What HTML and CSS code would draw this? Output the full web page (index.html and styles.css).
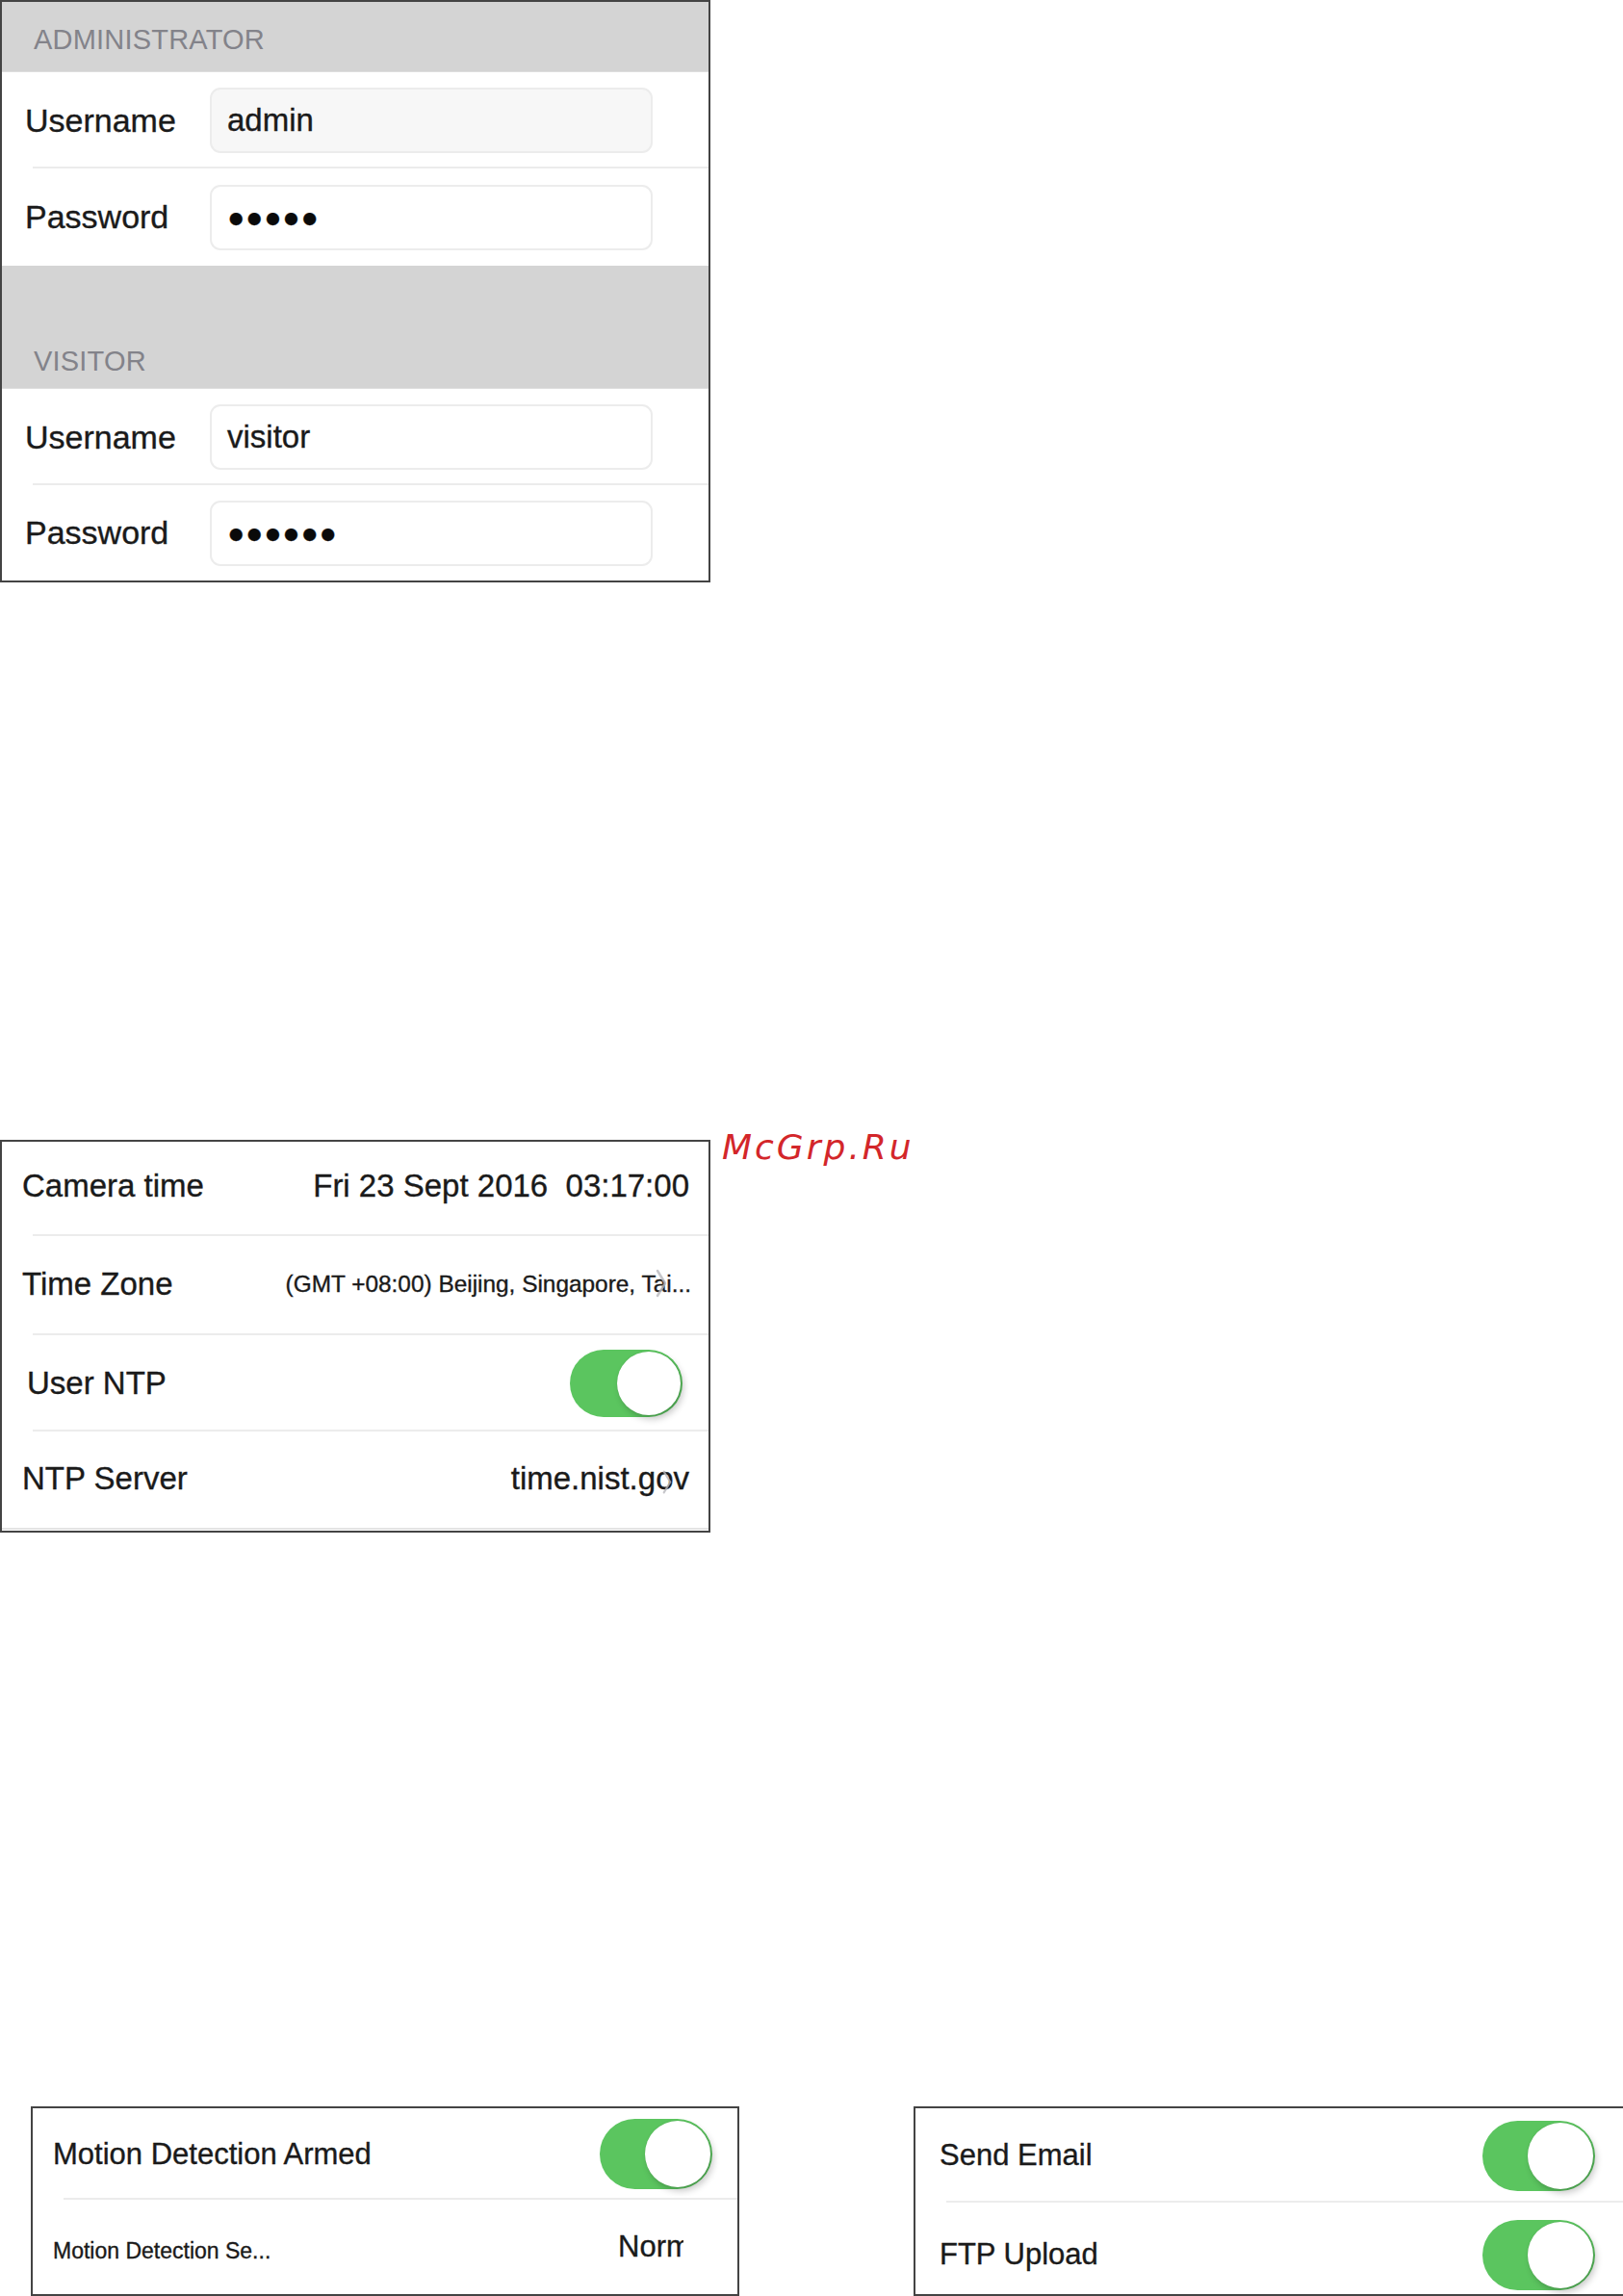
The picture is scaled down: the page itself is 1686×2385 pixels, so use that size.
FILE: index.html
```html
<!DOCTYPE html>
<html lang="en">
<head>
<meta charset="utf-8">
<title>Camera settings</title>
<link rel="stylesheet" href="styles.css">
</head>
<body>
<div class="page">

  <section class="panel accounts">
    <div class="group-head admin-head">ADMINISTRATOR</div>
    <div class="row field-row sep r1">
      <span class="label">Username</span>
      <div class="input filled">admin</div>
    </div>
    <div class="row field-row r2">
      <span class="label">Password</span>
      <div class="input dots">●●●●●</div>
    </div>
    <div class="group-head visitor-head">VISITOR</div>
    <div class="row field-row sep r3">
      <span class="label">Username</span>
      <div class="input">visitor</div>
    </div>
    <div class="row field-row r4">
      <span class="label">Password</span>
      <div class="input dots">●●●●●●</div>
    </div>
  </section>

  <div class="time-line">
    <section class="panel timepanel">
      <div class="row trow sep t1">
        <span class="label">Camera time</span>
        <span class="value">Fri 23 Sept 2016  03:17:00</span>
      </div>
      <div class="row trow sep t2">
        <span class="label">Time Zone</span>
        <span class="value small">(GMT +08:00) Beijing, Singapore, Tai...</span>
        <svg class="chev chev-tz" viewBox="0 0 12 30" width="12" height="30"><path d="M2 2 L10 15 L2 28" fill="none" stroke="#b8b8bd" stroke-width="2.5" stroke-linecap="round" stroke-linejoin="round"/></svg>
      </div>
      <div class="row trow sep t3">
        <span class="label ntp">User NTP</span>
        <span class="toggle"></span>
      </div>
      <div class="row trow t4">
        <span class="label">NTP Server</span>
        <span class="value">time.nist.gov</span>
        <svg class="chev chev-ntp" viewBox="0 0 12 30" width="10" height="27"><path d="M2 2 L10 15 L2 28" fill="none" stroke="#b8b8bd" stroke-width="2.5" stroke-linecap="round" stroke-linejoin="round"/></svg>
      </div>
    </section>
    <div class="brand">McGrp.Ru</div>
  </div>

  <div class="bottom-line">
    <section class="panel motion">
      <div class="row brow sep b1">
        <span class="label blabel">Motion Detection Armed</span>
        <span class="toggle tall"></span>
      </div>
      <div class="row brow b2">
        <span class="label slabel">Motion Detection Se...</span>
        <span class="clipval">Normal</span>
      </div>
    </section>
    <section class="panel alerts">
      <div class="row brow sep b1 rb1">
        <span class="label blabel">Send Email</span>
        <span class="toggle tall"></span>
      </div>
      <div class="row brow b2 rb2">
        <span class="label blabel">FTP Upload</span>
        <span class="toggle tall low"></span>
      </div>
    </section>
  </div>

</div>
</body>
</html>
```

FILE: styles.css
```css
html, body {
  margin: 0;
  padding: 0;
  background: #ffffff;
}

body {
  width: 1686px;
  height: 2385px;
  overflow: hidden;
  font-family: "Liberation Sans", Arial, Helvetica, sans-serif;
  color: #1f1f1f;
}

.page {
  display: flex;
  flex-direction: column;
}

.panel {
  box-sizing: border-box;
  border: 2px solid #444444;
  background: #ffffff;
  display: flex;
  flex-direction: column;
}

.row {
  position: relative;
  display: flex;
  align-items: center;
  box-sizing: border-box;
}

.row.sep::after {
  content: "";
  position: absolute;
  left: 32px;
  right: 0;
  bottom: 0;
  height: 2px;
  background: #ececec;
}

.label,
.value,
.input,
.clipval {
  -webkit-text-stroke: 0.35px currentColor;
}

/* ---------- Accounts panel ---------- */

.accounts {
  width: 738px;
  height: 605px;
}

.group-head {
  box-sizing: border-box;
  background: #d4d4d4;
  color: #83838a;
  font-size: 29px;
  line-height: 29px;
  padding-left: 33px;
  letter-spacing: 0.2px;
  border-bottom: 1px solid #dedede;
}

.admin-head {
  height: 73px;
  padding-top: 25px;
}

.visitor-head {
  height: 128px;
  padding-top: 85px;
}

.field-row {
  padding-left: 24px;
}

.r1 { height: 100px; }
.r2 { height: 101px; }
.r3 { height: 100px; }
.r4 { height: 99px; }

.field-row .label {
  width: 192px;
  font-size: 34px;
  color: #1a1a1a;
}

.input {
  box-sizing: border-box;
  width: 460px;
  height: 68px;
  border: 2px solid #ececec;
  border-radius: 11px;
  background: #ffffff;
  padding-left: 16px;
  display: flex;
  align-items: center;
  font-size: 33px;
  color: #1a1a1a;
}

.input.filled {
  background: #f7f7f7;
}

.input.dots {
  font-size: 30px;
  letter-spacing: 1px;
  color: #0a0a0a;
  padding-left: 16px;
}

/* ---------- Time panel ---------- */

.time-line {
  margin-top: 569px;
  display: flex;
  align-items: flex-start;
}

.timepanel {
  margin-top: 10px;
  width: 738px;
  height: 408px;
}

.trow {
  padding-left: 21px;
  padding-right: 20px;
  justify-content: space-between;
}

.t1 { height: 98px; padding-bottom: 6px; }
.t2 { height: 103px; padding-bottom: 4px; }
.t3 { height: 100px; padding-right: 27px; }
.t4 {
  height: 102px;
  border-bottom: 2px solid #e4e4e4;
  padding-bottom: 2px;
}

.trow .label {
  font-size: 33px;
  color: #1a1a1a;
}

.trow .label.ntp {
  padding-left: 5px;
}

.value {
  font-size: 33px;
  color: #1a1a1a;
  white-space: pre;
}

.value.small {
  font-size: 24.4px;
  margin-right: -2px;
}

.chev {
  position: absolute;
  opacity: 0.8;
}

.chev-tz {
  right: 43px;
  top: 34px;
}

.chev-ntp {
  right: 38px;
  top: 39px;
}

.toggle {
  position: relative;
  display: block;
  width: 117px;
  height: 70px;
  border-radius: 35px;
  background: #5bc55f;
  flex: none;
}

.toggle::after {
  content: "";
  position: absolute;
  right: 2px;
  top: 2px;
  width: 66px;
  height: 66px;
  border-radius: 50%;
  background: #ffffff;
  box-shadow: 3px 4px 7px rgba(0, 0, 0, 0.22), 0 0 1px rgba(0, 0, 0, 0.15);
}

.toggle.tall {
  height: 73px;
  border-radius: 37px;
}

.toggle.tall::after {
  width: 68px;
  height: 69px;
}

.brand {
  margin-left: 12px;
  font-family: "DejaVu Sans", sans-serif;
  font-style: italic;
  font-size: 36px;
  line-height: 36px;
  letter-spacing: 3px;
  color: #d3262a;
}

/* ---------- Bottom panels ---------- */

.bottom-line {
  margin-top: 596px;
  display: flex;
  padding-left: 32px;
  gap: 181px;
}

.motion,
.alerts {
  height: 197px;
  flex: none;
}

.motion {
  width: 736px;
}

.alerts {
  width: 745px;
}

.brow {
  padding-left: 21px;
}

.b1 { height: 95px; padding-right: 26px; justify-content: space-between; }
.b2 { height: 98px; }

.rb1 { height: 98px; padding-left: 25px; padding-right: 35px; }
.rb2 { height: 95px; padding-left: 25px; padding-right: 35px; justify-content: space-between; align-items: flex-start; }

.blabel {
  font-size: 31px;
  color: #1a1a1a;
}

.rb2 .blabel {
  margin-top: 36px;
}

.rb2 .toggle {
  margin-top: 18px;
}

.slabel {
  font-size: 23px;
  color: #1a1a1a;
  padding-top: 8px;
}

.clipval {
  margin-left: auto;
  margin-right: 56px;
  width: 68px;
  overflow: hidden;
  white-space: nowrap;
  font-size: 31px;
  color: #1a1a1a;
}
```
